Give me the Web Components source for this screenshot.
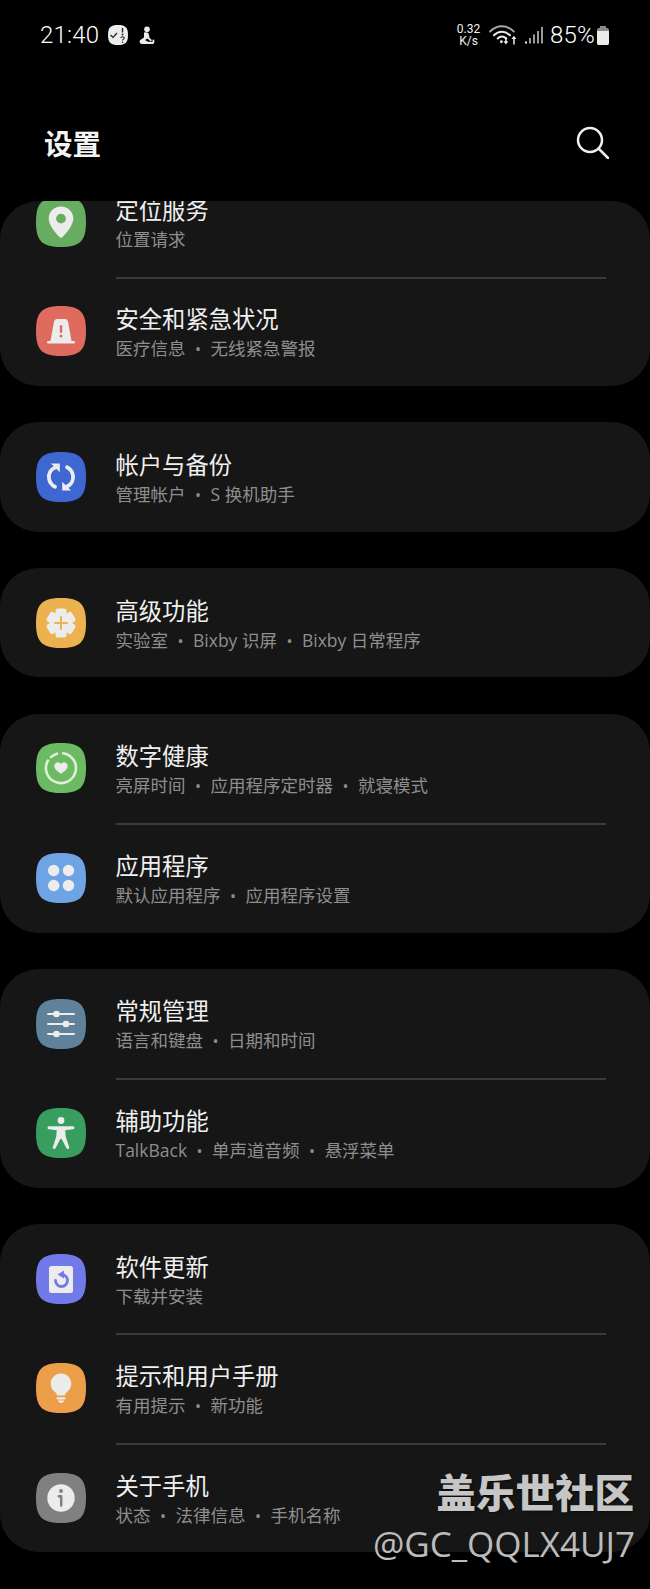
<!DOCTYPE html>
<html lang="zh-CN">
<head>
<meta charset="utf-8">
<title>设置</title>
<style>
  html, body { margin: 0; background: #000; }
  body { width: 650px; height: 1589px; overflow: hidden; position: relative; font-family: Roboto, "Noto Sans CJK SC", sans-serif; }
  settings-card { margin-bottom: 36.200px; }
  settings-card.scrolled { margin-top: -34px; }
</style>
</head>
<body>
<status-bar></status-bar>
<page-header title="设置"></page-header>
<settings-list>
  <settings-card class="scrolled">
    <settings-row icon="pin" color="#66ad5f" title="定位服务" sub="位置请求"></settings-row>
    <settings-row icon="alert" color="#df6b5e" title="安全和紧急状况" sub="医疗信息|无线紧急警报"></settings-row>
  </settings-card>
  <settings-card>
    <settings-row icon="sync" color="#3f67d1" title="帐户与备份" sub="管理帐户|S 换机助手"></settings-row>
  </settings-card>
  <settings-card>
    <settings-row icon="gear" color="#ecb24f" title="高级功能" sub="实验室|Bixby 识屏|Bixby 日常程序"></settings-row>
  </settings-card>
  <settings-card>
    <settings-row icon="heart" color="#6cba62" title="数字健康" sub="亮屏时间|应用程序定时器|就寝模式"></settings-row>
    <settings-row icon="apps" color="#6ea3e4" title="应用程序" sub="默认应用程序|应用程序设置"></settings-row>
  </settings-card>
  <settings-card>
    <settings-row icon="sliders" color="#5f8199" title="常规管理" sub="语言和键盘|日期和时间"></settings-row>
    <settings-row icon="person" color="#379e5f" title="辅助功能" sub="TalkBack|单声道音频|悬浮菜单"></settings-row>
  </settings-card>
  <settings-card>
    <settings-row icon="update" color="#7279e8" title="软件更新" sub="下载并安装"></settings-row>
    <settings-row icon="bulb" color="#ec9e48" title="提示和用户手册" sub="有用提示|新功能"></settings-row>
    <settings-row icon="info" color="#808080" title="关于手机" sub="状态|法律信息|手机名称"></settings-row>
  </settings-card>
</settings-list>
<water-mark></water-mark>

<script>
const INK = "#ececec";

// gear: six wide teeth round a hub
const gearTeeth = [0, 60, 120, 180, 240, 300]
  .map(a => `<rect x="19.500" y="10.500" width="11" height="10" rx="2.500" transform="rotate(${a} 25 25)"/>`)
  .join("");

// icon glyphs, drawn on a 50x50 box; currentColor is the tile colour
const ICONS = {
  pin: `<path fill="${INK}" fill-rule="evenodd" d="M25 9.500c-7 0-12.300 5.200-12.300 12 0 6.500 6.500 14.200 10.500 18.200a2.500 2.500 0 0 0 3.600 0c4-4 10.500-11.700 10.500-18.200 0-6.800-5.300-12-12.300-12Zm0 7.200a4.900 4.900 0 1 1 0 9.800 4.900 4.900 0 0 1 0-9.800Z"/>`,
  alert: `<path fill="${INK}" d="M18 15.500a3 3 0 0 1 3-2.500h8a3 3 0 0 1 3 2.500L35.500 35h-21Z"/><rect x="11" y="35" width="28" height="2.400" rx="1.200" fill="${INK}"/><rect x="23.800" y="19" width="2.400" height="8" rx="1.200" fill="currentColor"/><circle cx="25" cy="30" r="1.500" fill="currentColor"/>`,
  sync: `<g fill="none" stroke="${INK}" stroke-width="3.800" stroke-linecap="round"><path d="M20.500 15C14.500 17 12.300 22 13 26.500c.5 3.500 2.500 6.500 6 8.300"/><path d="M29.500 35c6-2 8.200-7 7.500-11.500-.5-3.500-2.500-6.500-6-8.300"/></g><path fill="${INK}" d="M15 11.500h8.800v8.800Z"/><path fill="${INK}" d="M35 38.500h-8.800v-8.800Z"/>`,
  gear: `<g fill="${INK}"><circle cx="25" cy="25" r="10.500"/>${gearTeeth}</g><path fill="none" stroke="currentColor" stroke-width="2" stroke-linecap="round" d="M25 19v12M19 25h12"/>`,
  heart: `<path fill="none" stroke="#dff0da" stroke-width="2.600" stroke-linecap="round" d="M27 10.200a15 15 0 1 1-15 7.300"/><path fill="none" stroke="#dff0da" stroke-width="2.600" stroke-linecap="round" d="M15 14a15 15 0 0 1 6-3.300"/><path fill="${INK}" d="M25 33.500c-5.500-4-9.300-7-9.300-11a5 5 0 0 1 9.300-2.600 5 5 0 0 1 9.300 2.600c0 4-3.800 7-9.300 11Z" transform="translate(25 25.500) scale(.72) translate(-25 -26)"/>`,
  apps: `<g fill="${INK}"><circle cx="17.700" cy="17.500" r="5.700"/><circle cx="32.500" cy="17.500" r="5.700"/><circle cx="17.700" cy="32.500" r="5.700"/><circle cx="32.500" cy="32.500" r="5.700"/></g>`,
  sliders: `<g fill="none" stroke="${INK}" stroke-width="2" stroke-linecap="round"><path d="M12 15h26M12 25h26M12 35h26"/></g><g fill="${INK}"><circle cx="20.500" cy="15" r="3.300"/><circle cx="30" cy="25" r="3.300"/><circle cx="20.500" cy="35" r="3.300"/></g>`,
  person: `<circle cx="25" cy="12.500" r="3.400" fill="${INK}"/><path fill="${INK}" d="M13 18.200h24a1.500 1.500 0 0 1 0 3l-7.800 1 .6 6.500 3.400 10.500c.4 1.600-1.800 2.600-2.700 1L25.700 31h-1.400l-4.800 9.200c-.9 1.600-3.100.6-2.700-1l3.400-10.500.6-6.500-7.800-1a1.500 1.500 0 0 1 0-3Z"/>`,
  update: `<rect x="13" y="12" width="24" height="27" rx="2.500" fill="${INK}"/><path fill="none" stroke="currentColor" stroke-width="2.800" stroke-linecap="round" d="M25.500 20.500a6 6 0 1 1-6 6"/><path fill="currentColor" d="M28 16.500v8l-6.500-4Z"/>`,
  bulb: `<path fill="${INK}" d="M25 10.500c-5.800 0-10.300 4.600-10.300 10.200 0 3.500 1.800 6.300 4.200 8.200 1.400 1.100 2 2.200 2.200 3.600h7.800c.2-1.400.8-2.500 2.200-3.600 2.400-1.900 4.200-4.700 4.200-8.200 0-5.600-4.500-10.200-10.300-10.200Z"/><rect x="20.500" y="34.200" width="9" height="2.300" rx="1" fill="${INK}"/><path fill="${INK}" d="M21.800 37.500h6.400c-.4 1.500-1.600 2.500-3.200 2.500s-2.800-1-3.200-2.500Z"/>`,
  info: `<circle cx="25" cy="25" r="13.700" fill="${INK}"/><circle cx="25" cy="18" r="1.900" fill="currentColor"/><path fill="none" stroke="currentColor" stroke-width="2.500" stroke-linecap="round" stroke-linejoin="round" d="M22.800 23.300h2.400v9.200"/>`
};

class StatusBar extends HTMLElement {
  constructor() {
    super();
    const shadow = this.attachShadow({ mode: "open" });
    shadow.innerHTML = `
    <style>
      :host { display: flex; height: 70px; align-items: center; justify-content: space-between; padding: 0 40px 0 40px; color: #fff; font-family: Roboto, sans-serif; box-sizing: border-box; }
      .side { display: flex; align-items: center; }
      .big { font-size: 24px; font-weight: 300; letter-spacing: .2px; }
      svg { display: block; }
      .speed { font-size: 12px; line-height: 12px; text-align: center; font-weight: 400; width: 25px; color: #f0f0f0; }
    </style>
    <div class="side">
      <span class="big">21:40</span>
      <svg style="margin-left:9px" width="20" height="20" viewBox="0 0 20 20">
        <path fill="#ececec" d="M10 0c7.500 0 10 2.500 10 10s-2.500 10-10 10S0 17.500 0 10 2.500 0 10 0Z"/>
        <path fill="none" stroke="#222" stroke-width="1.200" d="M2.500 10l2.500 2.500L9 8"/>
        <path fill="none" stroke="#222" stroke-width="1.400" d="M14.500 3v4.500"/>
        <circle cx="14.500" cy="9.500" r=".9" fill="#222"/>
        <path fill="none" stroke="#222" stroke-width="1.100" d="M12.800 13c.2-1.600 3.400-1.600 3.400 0 0 1.200-1.700 1.200-1.700 2.600"/>
        <circle cx="14.500" cy="17.300" r=".8" fill="#222"/>
      </svg>
      <svg style="margin-left:11px" width="16" height="19" viewBox="0 0 16 19">
        <circle cx="8" cy="3.200" r="2.800" fill="#ececec"/>
        <path fill="#ececec" d="M5 6.800c1.500-.8 3.500-.5 4.500.5l1 4.500 2.500 2.500-1.500 1L8.500 12.500 6 14l3 1.800h4c1 0 1-1 .3-1.500l1-1c1.700 1.200 1.700 4.700-1.300 4.700H3c-2.500 0-3.500-3-1-4.500l3-2Z"/>
      </svg>
    </div>
    <div class="side">
      <div class="speed">0.32<br>K/s</div>
      <svg style="margin-left:8px" width="28" height="21.500" viewBox="0 0 26 20">
        <g fill="none" stroke="#ececec" stroke-linecap="round">
          <path stroke="#a8a8a8" stroke-width="1.800" d="M1 7c6.500-6.500 15.500-6.500 22 0"/>
          <path stroke-width="1.800" d="M4.500 10.500c4.500-4.500 10.500-4.500 15 0"/>
          <path stroke-width="1.800" d="M8 13.500c2.500-2.500 5.500-2.500 8 0"/>
        </g>
        <circle cx="11.500" cy="16.500" r="1.300" fill="#ececec"/>
        <path fill="#ececec" d="M15 12h1.400v4H18l-2.300 3-2.300-3H15ZM22.500 19v-5h-1.600l2.300-3 2.300 3h-1.600v5Z"/>
      </svg>
      <svg style="margin-left:7.500px" width="19" height="18" viewBox="0 0 19 18">
        <rect x="0" y="15.500" width="2" height="2" fill="#ececec"/>
        <rect x="4" y="12" width="2" height="5.500" fill="#9a9a9a"/>
        <rect x="8" y="8.500" width="2" height="9" fill="#9a9a9a"/>
        <rect x="12" y="5" width="2" height="12.500" fill="#9a9a9a"/>
        <rect x="16" y="1" width="2" height="16.500" fill="#9a9a9a"/>
      </svg>
      <span class="big" style="margin-left:6.500px">85%</span>
      <svg style="margin-left:1px" width="14" height="19" viewBox="0 0 14 19">
        <path fill="#8a8a8a" d="M4 0h6v2.500H4Z"/>
        <rect x="1" y="2" width="12" height="17" rx="2" fill="#8a8a8a"/>
        <path fill="#ececec" d="M1 5h12v12a2 2 0 0 1-2 2H3a2 2 0 0 1-2-2Z"/>
      </svg>
    </div>`;
  }
}

class PageHeader extends HTMLElement {
  constructor() {
    super();
    const shadow = this.attachShadow({ mode: "open" });
    shadow.innerHTML = `
    <style>
      :host { display: flex; height: 131px; box-sizing: border-box; padding: 17px 41px 0 44px; align-items: center; justify-content: space-between; }
      h1 { margin: -4px 0 0; font: 700 28.500px "Noto Sans CJK SC", sans-serif; color: #f4f4f4; }
      svg { display: block; margin-top: -3px; }
    </style>
    <h1>${this.getAttribute("title")}</h1>
    <svg width="33" height="33" viewBox="0 0 33 33" fill="none" stroke="#f0f0f0" stroke-width="2.500" stroke-linecap="round">
      <circle cx="14" cy="14" r="12"/>
      <path d="M23 23 L32 32"/>
    </svg>`;
  }
}

class SettingsList extends HTMLElement {
  constructor() {
    super();
    const shadow = this.attachShadow({ mode: "open" });
    shadow.innerHTML = `
    <style>
      :host { display: block; height: 1388px; overflow: hidden; border-radius: 38px 38px 0 0; }
      .inner { display: flex; flex-direction: column; }
    </style>
    <div class="inner"><slot></slot></div>`;
  }
}

class SettingsCard extends HTMLElement {
  constructor() {
    super();
    const shadow = this.attachShadow({ mode: "open" });
    shadow.innerHTML = `
    <style>
      :host { display: block; background: #161616; border-radius: 38px; flex: none; }
    </style>
    <slot></slot>`;
  }
}

class SettingsRow extends HTMLElement {
  constructor() {
    super();
    const shadow = this.attachShadow({ mode: "open" });
    const color = this.getAttribute("color");
    const glyph = ICONS[this.getAttribute("icon")] || "";
    const sub = (this.getAttribute("sub") || "").split("|")
      .map(t => `<span>${t}</span>`).join(`<i>•</i>`);
    shadow.innerHTML = `
    <style>
      :host { display: block; height: 109.500px; box-sizing: border-box; }
      :host(:not(:last-child)) .text { border-bottom: 2px solid #3a3a3a; margin-bottom: -2px; padding-top: 3.500px; }
      .row { display: flex; height: 100%; padding: 0 44px 0 36px; box-sizing: border-box; }
      svg { flex: none; width: 50px; height: 50px; align-self: center; color: ${color}; }
      .text { flex: 1; margin-left: 29.500px; padding-top: 4px; display: flex; flex-direction: column; justify-content: center; font-family: Roboto, "Noto Sans CJK SC", sans-serif; box-sizing: border-box; }
      .title { font-size: 23.300px; line-height: 30px; color: #f0f0f0; }
      .sub { font-family: "Open Sans", "Noto Sans CJK SC", sans-serif; font-size: 17.500px; line-height: 24px; color: #8e8e8e; margin-top: 1px; white-space: nowrap; }
      i { font-style: normal; margin: 0 9.500px; font-size: 16px; }
    </style>
    <div class="row">
      <svg viewBox="0 0 50 50">
        <path fill="currentColor" d="M25 0C44 0 50 6 50 25S44 50 25 50 0 44 0 25 6 0 25 0Z"/>
        ${glyph}
      </svg>
      <div class="text">
        <div class="title">${this.getAttribute("title")}</div>
        <div class="sub">${sub}</div>
      </div>
    </div>`;
  }
}

class WaterMark extends HTMLElement {
  constructor() {
    super();
    const shadow = this.attachShadow({ mode: "open" });
    shadow.innerHTML = `
    <style>
      :host { position: absolute; right: 16px; top: 1465px; text-align: right; color: #c6c6c6; pointer-events: none; }
      .name { font: 900 39.500px/52px "Noto Sans CJK SC", sans-serif; text-shadow: 1px 1px 2px rgba(0,0,0,.6); }
      .id { font: 400 35px/46px "Open Sans", sans-serif; margin: 4px -1px 0 0; white-space: nowrap; color: #bcbcbc; }
    </style>
    <div class="name">盖乐世社区</div>
    <div class="id">@GC_QQLX4UJ7</div>`;
  }
}

customElements.define("status-bar", StatusBar);
customElements.define("page-header", PageHeader);
customElements.define("settings-list", SettingsList);
customElements.define("settings-card", SettingsCard);
customElements.define("settings-row", SettingsRow);
customElements.define("water-mark", WaterMark);
</script>
</body>
</html>
